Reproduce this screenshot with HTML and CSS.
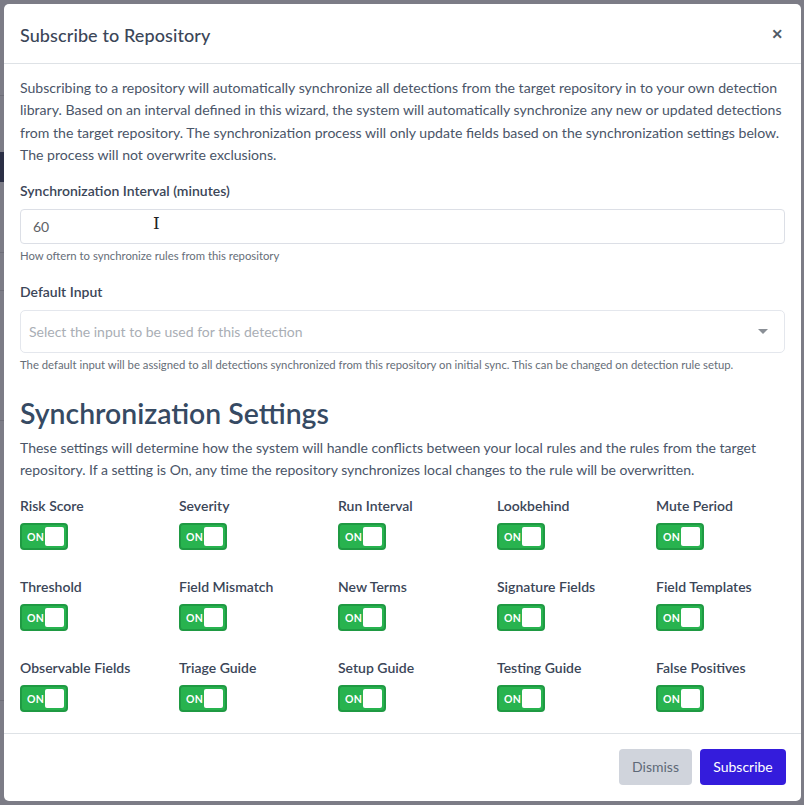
FILE: index.html
```html
<!DOCTYPE html>
<html lang="en">
<head>
<meta charset="utf-8">
<title>Subscribe to Repository</title>
<link rel="stylesheet" href="styles.css">
</head>
<body>
<div class="backdrop">
  <div class="bg-strip">
    <span class="bg-line l1"></span>
    <span class="bg-block"></span>
    <span class="bg-line l2"></span>
    <span class="bg-line l3"></span>
    <span class="bg-line l4"></span>
    <span class="bg-line l5"></span>
  </div>
  <div class="modal">
    <div class="modal-header">
      <h3 class="modal-title">Subscribe to Repository</h3>
      <span class="close">&times;</span>
    </div>
    <div class="modal-body">
      <p class="intro">Subscribing to a repository will automatically synchronize all detections from the target repository in to your own detection library. Based on an interval defined in this wizard, the system will automatically synchronize any new or updated detections from the target repository. The synchronization process will only update fields based on the synchronization settings below. The process will not overwrite exclusions.</p>

      <div class="field">
        <label class="label">Synchronization Interval (minutes)</label>
        <div class="input"><span class="input-value">60</span><span class="ibeam">I</span></div>
        <div class="help">How oftern to synchronize rules from this repository</div>
      </div>

      <div class="field">
        <label class="label">Default Input</label>
        <div class="select"><span class="placeholder">Select the input to be used for this detection</span><span class="caret"></span></div>
        <div class="help">The default input will be assigned to all detections synchronized from this repository on initial sync. This can be changed on detection rule setup.</div>
      </div>

      <h2 class="section-title">Synchronization Settings</h2>
      <p class="section-desc">These settings will determine how the system will handle conflicts between your local rules and the rules from the target repository. If a setting is On, any time the repository synchronizes local changes to the rule will be overwritten.</p>

      <div class="grid">
        <div class="setting"><div class="setting-label">Risk Score</div><div class="toggle"><span class="toggle-text">ON</span><span class="knob"></span></div></div>
        <div class="setting"><div class="setting-label">Severity</div><div class="toggle"><span class="toggle-text">ON</span><span class="knob"></span></div></div>
        <div class="setting"><div class="setting-label">Run Interval</div><div class="toggle"><span class="toggle-text">ON</span><span class="knob"></span></div></div>
        <div class="setting"><div class="setting-label">Lookbehind</div><div class="toggle"><span class="toggle-text">ON</span><span class="knob"></span></div></div>
        <div class="setting"><div class="setting-label">Mute Period</div><div class="toggle"><span class="toggle-text">ON</span><span class="knob"></span></div></div>
        <div class="setting"><div class="setting-label">Threshold</div><div class="toggle"><span class="toggle-text">ON</span><span class="knob"></span></div></div>
        <div class="setting"><div class="setting-label">Field Mismatch</div><div class="toggle"><span class="toggle-text">ON</span><span class="knob"></span></div></div>
        <div class="setting"><div class="setting-label">New Terms</div><div class="toggle"><span class="toggle-text">ON</span><span class="knob"></span></div></div>
        <div class="setting"><div class="setting-label">Signature Fields</div><div class="toggle"><span class="toggle-text">ON</span><span class="knob"></span></div></div>
        <div class="setting"><div class="setting-label">Field Templates</div><div class="toggle"><span class="toggle-text">ON</span><span class="knob"></span></div></div>
        <div class="setting"><div class="setting-label">Observable Fields</div><div class="toggle"><span class="toggle-text">ON</span><span class="knob"></span></div></div>
        <div class="setting"><div class="setting-label">Triage Guide</div><div class="toggle"><span class="toggle-text">ON</span><span class="knob"></span></div></div>
        <div class="setting"><div class="setting-label">Setup Guide</div><div class="toggle"><span class="toggle-text">ON</span><span class="knob"></span></div></div>
        <div class="setting"><div class="setting-label">Testing Guide</div><div class="toggle"><span class="toggle-text">ON</span><span class="knob"></span></div></div>
        <div class="setting"><div class="setting-label">False Positives</div><div class="toggle"><span class="toggle-text">ON</span><span class="knob"></span></div></div>
      </div>
    </div>
    <div class="modal-footer">
      <button class="btn btn-dismiss">Dismiss</button>
      <button class="btn btn-primary">Subscribe</button>
    </div>
  </div>
</div>
</body>
</html>
```

FILE: styles.css
```css
* { box-sizing: border-box; }
html, body { margin: 0; padding: 0; }
body {
  width: 804px;
  height: 805px;
  overflow: hidden;
  font-family: Lato, "Noto Sans", sans-serif;
  background: #7c7c86;
}
.backdrop {
  position: relative;
  width: 804px;
  height: 805px;
  padding: 4px 3px 4px 4px;
  background: #7c7c86;
}
.bg-strip {
  position: absolute;
  left: 0; top: 0;
  width: 4px; height: 805px;
}
.bg-line { position: absolute; left: 0; width: 4px; height: 1px; background: #6e6e78; }
.l1 { top: 95px; }
.l2 { top: 252px; }
.l3 { top: 290px; }
.l4 { top: 420px; }
.l5 { top: 700px; }
.bg-block { position: absolute; left: 0; top: 152px; width: 4px; height: 30px; background: #2b2f45; }
.modal {
  width: 797px;
  height: 797px;
  background: #fff;
  border-radius: 5px;
  display: flex;
  flex-direction: column;
  color: #4a5568;
}
.modal-header {
  display: flex;
  align-items: center;
  justify-content: space-between;
  height: 60px;
  padding: 0 18px 0 16px;
  border-bottom: 1px solid #dee2e6;
}
.modal-title {
  margin: 0;
  font-size: 18px;
  font-weight: 500;
  color: #3b4658;
  padding-top: 2px;
  letter-spacing: 0.1px;
}
.close {
  font-family: "Noto Sans", sans-serif;
  font-size: 20px;
  color: #505a66;
  font-weight: 600;
  line-height: 1;
}
.modal-body {
  flex: 1;
  padding: 13px 16px 0 16px;
}
.intro {
  margin: 0;
  font-size: 14.1px;
  line-height: 22.4px;
  color: #4a5568;
}
.field { margin-top: 13px; }
.field + .field { margin-top: 17px; }
.label {
  display: block;
  font-size: 14px;
  font-weight: 600;
  color: #3b4658;
  line-height: 22px;
  margin-bottom: 7px;
}
.input {
  position: relative;
  height: 35px;
  border: 1px solid #dcdfe6;
  border-radius: 4px;
  display: flex;
  align-items: center;
  padding-left: 12px;
}
.input-value { font-size: 14px; color: #606266; }
.ibeam {
  position: absolute;
  left: 132px;
  top: 3px;
  font-family: "DejaVu Serif", serif;
  font-size: 17px;
  color: #222;
}
.help {
  font-size: 11.3px;
  color: #666e78;
  margin-top: 4px;
  line-height: 16px;
}
.select {
  height: 43px;
  border: 1px solid #e4e7ed;
  border-radius: 5px;
  display: flex;
  align-items: center;
  justify-content: space-between;
  padding: 0 16px 0 8px;
}
.placeholder { font-size: 14px; color: #a9aeb5; }
.caret {
  width: 0; height: 0;
  border-left: 5px solid transparent;
  border-right: 5px solid transparent;
  border-top: 5px solid #8a8f96;
}
.section-title {
  margin: 22px 0 0 0;
  font-size: 28.4px;
  font-weight: 600;
  color: #364a63;
  line-height: 36px;
}
.section-desc {
  margin: 6px 0 0 0;
  font-size: 14px;
  line-height: 22.4px;
  color: #4a5568;
}
.grid {
  margin-top: 15px;
  display: grid;
  grid-template-columns: repeat(5, 159px);
  row-gap: 27px;
}
.setting-label {
  font-size: 14px;
  font-weight: 600;
  color: #3b4658;
  line-height: 20px;
  margin-bottom: 7px;
}
.toggle {
  width: 48px;
  height: 27px;
  background: #28b34f;
  border: 2px solid #1f9a43;
  border-radius: 4px;
  display: flex;
  align-items: center;
  justify-content: space-between;
  padding: 0 2px 0 5px;
}
.toggle-text {
  font-size: 10.5px;
  font-weight: 700;
  color: #fff;
  letter-spacing: 0.2px;
}
.knob {
  width: 19px;
  height: 19px;
  background: #fff;
  border-radius: 2px;
}
.modal-footer {
  height: 68px;
  border-top: 1px solid #dee2e6;
  display: flex;
  justify-content: flex-end;
  align-items: center;
  gap: 8px;
  padding: 0 15px 2px 0;
}
.btn {
  font-family: Lato, "Noto Sans", sans-serif;
  font-size: 14px;
  height: 36px;
  border: none;
  border-radius: 4px;
  padding: 0 12px;
  cursor: pointer;
}
.btn-dismiss { background: #d0d4dc; color: #5e6977; width: 73px; }
.btn-primary { background: #341cdc; color: #fff; width: 86px; }
```
